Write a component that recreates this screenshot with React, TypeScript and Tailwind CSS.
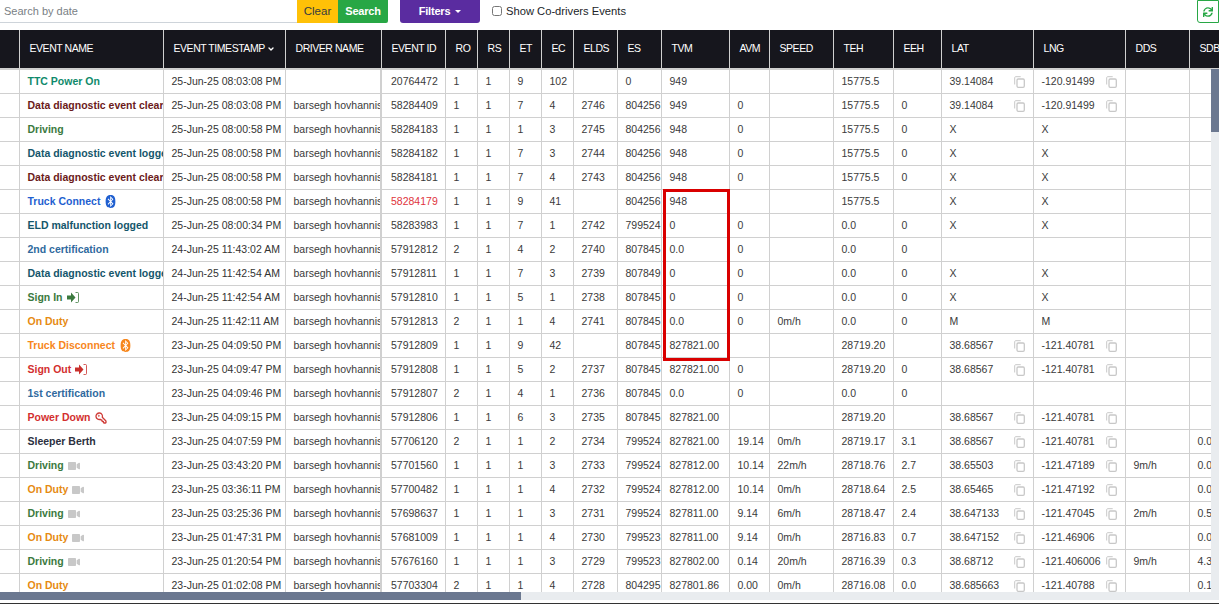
import type { ReactNode } from "react"
import { FaBluetooth, FaVideo, FaSync } from "react-icons/fa"
import { KeyRound, ChevronDown } from "lucide-react"

type Row = {
  name: string
  color: string
  icon?: "bt" | "in" | "out" | "key" | "cam"
  iconColor?: string
  time: string
  driver?: boolean
  id: string
  idRed?: boolean
  ro: string
  rs: string
  et: string
  ec: string
  elds: string
  es: string
  tvm: string
  avm: string
  speed: string
  teh: string
  eeh: string
  lat: string
  lng: string
  dds: string
  sdb: string
}

const line = (
  name: string,
  color: string,
  icon: Row["icon"],
  time: string,
  id: string,
  v: string,
  extra: Partial<Row> = {}
): Row => {
  const p = v.split("|")
  return {
    name,
    color,
    icon,
    time,
    driver: true,
    id,
    ro: p[0],
    rs: p[1],
    et: p[2],
    ec: p[3],
    elds: p[4],
    es: p[5],
    tvm: p[6],
    avm: p[7],
    speed: p[8],
    teh: p[9],
    eeh: p[10],
    lat: p[11],
    lng: p[12],
    dds: p[13] ?? "",
    sdb: p[14] ?? "",
    ...extra,
  }
}

const GREEN = "text-[#3b7a3e]"
const ORANGE = "text-[#e68a13]"
const RED = "text-[#d32f2f]"
const TEAL = "text-[#14566b]"
const MAROON = "text-[#6b1a1a]"
const BLUE = "text-[#2f6a9e]"

const rows: Row[] = [
  line("TTC Power On", "text-[#0f8a6b]", undefined, "25-Jun-25 08:03:08 PM", "20764472", "1|1|9|102||0|949|||15775.5||39.14084|-120.91499", { driver: false }),
  line("Data diagnostic event clear", MAROON, undefined, "25-Jun-25 08:03:08 PM", "58284409", "1|1|7|4|2746|804256|949|0||15775.5|0|39.14084|-120.91499"),
  line("Driving", GREEN, undefined, "25-Jun-25 08:00:58 PM", "58284183", "1|1|1|3|2745|804256|948|0||15775.5|0|X|X"),
  line("Data diagnostic event logged", TEAL, undefined, "25-Jun-25 08:00:58 PM", "58284182", "1|1|7|3|2744|804256|948|0||15775.5|0|X|X"),
  line("Data diagnostic event clear", MAROON, undefined, "25-Jun-25 08:00:58 PM", "58284181", "1|1|7|4|2743|804256|948|0||15775.5|0|X|X"),
  line("Truck Connect", "text-[#1f5fd0]", "bt", "25-Jun-25 08:00:58 PM", "58284179", "1|1|9|41||804256|948|||15775.5||X|X", { idRed: true, iconColor: "text-[#1f5fd0]" }),
  line("ELD malfunction logged", TEAL, undefined, "25-Jun-25 08:00:34 PM", "58283983", "1|1|7|1|2742|799524|0|0||0.0|0|X|X"),
  line("2nd certification", BLUE, undefined, "24-Jun-25 11:43:02 AM", "57912812", "2|1|4|2|2740|807845|0.0|0||0.0|0||"),
  line("Data diagnostic event logged", TEAL, undefined, "24-Jun-25 11:42:54 AM", "57912811", "1|1|7|3|2739|807849|0|0||0.0|0|X|X"),
  line("Sign In", GREEN, "in", "24-Jun-25 11:42:54 AM", "57912810", "1|1|5|1|2738|807845|0|0||0.0|0|X|X"),
  line("On Duty", ORANGE, undefined, "24-Jun-25 11:42:11 AM", "57912813", "2|1|1|4|2741|807845|0.0|0|0m/h|0.0|0|M|M"),
  line("Truck Disconnect", "text-[#f7861b]", "bt", "23-Jun-25 04:09:50 PM", "57912809", "1|1|9|42||807845|827821.00|||28719.20||38.68567|-121.40781", { iconColor: "text-[#f7861b]" }),
  line("Sign Out", RED, "out", "23-Jun-25 04:09:47 PM", "57912808", "1|1|5|2|2737|807845|827821.00|0||28719.20|0|38.68567|-121.40781"),
  line("1st certification", BLUE, undefined, "23-Jun-25 04:09:46 PM", "57912807", "2|1|4|1|2736|807845|0.0|0||0.0|0||"),
  line("Power Down", RED, "key", "23-Jun-25 04:09:15 PM", "57912806", "1|1|6|3|2735|807845|827821.00|||28719.20||38.68567|-121.40781"),
  line("Sleeper Berth", "text-[#2b3040]", undefined, "23-Jun-25 04:07:59 PM", "57706120", "2|1|1|2|2734|799524|827821.00|19.14|0m/h|28719.17|3.1|38.68567|-121.40781||0.0"),
  line("Driving", GREEN, "cam", "23-Jun-25 03:43:20 PM", "57701560", "1|1|1|3|2733|799524|827812.00|10.14|22m/h|28718.76|2.7|38.65503|-121.47189|9m/h|0.0"),
  line("On Duty", ORANGE, "cam", "23-Jun-25 03:36:11 PM", "57700482", "1|1|1|4|2732|799524|827812.00|10.14|0m/h|28718.64|2.5|38.65465|-121.47192||0.0"),
  line("Driving", GREEN, "cam", "23-Jun-25 03:25:36 PM", "57698637", "1|1|1|3|2731|799524|827811.00|9.14|6m/h|28718.47|2.4|38.647133|-121.47045|2m/h|0.5"),
  line("On Duty", ORANGE, "cam", "23-Jun-25 01:47:31 PM", "57681009", "1|1|1|4|2730|799523|827811.00|9.14|0m/h|28716.83|0.7|38.647152|-121.46906||0.0"),
  line("Driving", GREEN, "cam", "23-Jun-25 01:20:54 PM", "57676160", "1|1|1|3|2729|799523|827802.00|0.14|20m/h|28716.39|0.3|38.68712|-121.406006|9m/h|4.3"),
  line("On Duty", ORANGE, undefined, "23-Jun-25 01:02:08 PM", "57703304", "2|1|1|4|2728|804295|827801.86|0.00|0m/h|28716.08|0.0|38.685663|-121.40788||0.1"),
]

const columns: { label: string; width: number }[] = [
  { label: "", width: 19 },
  { label: "EVENT NAME", width: 144 },
  { label: "EVENT TIMESTAMP", width: 122 },
  { label: "DRIVER NAME", width: 96 },
  { label: "EVENT ID", width: 64 },
  { label: "RO", width: 32 },
  { label: "RS", width: 32 },
  { label: "ET", width: 32 },
  { label: "EC", width: 32 },
  { label: "ELDS", width: 44 },
  { label: "ES", width: 44 },
  { label: "TVM", width: 68 },
  { label: "AVM", width: 40 },
  { label: "SPEED", width: 64 },
  { label: "TEH", width: 60 },
  { label: "EEH", width: 48 },
  { label: "LAT", width: 92 },
  { label: "LNG", width: 92 },
  { label: "DDS", width: 64 },
  { label: "SDB", width: 64 },
]

function CopyIcon() {
  return (
    <svg viewBox="0 0 11 12" className="w-[11px] h-[12px] shrink-0 text-[#c8c8c8]" fill="none" stroke="currentColor">
      <path d="M.7 8.5V1.7q0-1 1-1h5" strokeWidth="1" />
      <rect x="3" y="3" width="7.3" height="8.3" rx="1.2" strokeWidth="1.3" />
    </svg>
  )
}

// arrow going into a thin bracket, used for sign in and sign out
function LogIcon({ className }: { className: string }) {
  return (
    <svg viewBox="0 0 12 11" className={`w-[12px] h-[11px] ${className}`}>
      <path d="M0 3.5h4V.5l4.5 5-4.5 5v-3H0z" fill="currentColor" />
      <path d="M8.5.5h2q1 0 1 1v8q0 1-1 1h-2" fill="none" stroke="currentColor" strokeWidth=".8" />
    </svg>
  )
}

function EventIcon({ row }: { row: Row }) {
  if (row.icon === "bt") {
    return (
      <span className={`inline-flex items-center ${row.iconColor}`}>
        <FaBluetooth size={13} />
      </span>
    )
  }
  if (row.icon === "in") return <LogIcon className="text-[#3b7a3e]" />
  if (row.icon === "out") return <LogIcon className="text-[#c9302c]" />
  if (row.icon === "key") return <KeyRound size={12} strokeWidth={2.6} className="text-[#cf3a36] -scale-x-100" />
  if (row.icon === "cam") return <FaVideo size={12} className="text-[#c8c8c8]" />
  return null
}

function Cell({ children, className = "" }: { children?: ReactNode; className?: string }) {
  return (
    <td className={`h-[24px] border border-[#d0d0d0] px-[8px] pt-[1px] pb-0 whitespace-nowrap overflow-hidden ${className}`}>
      {children}
    </td>
  )
}

function Coord({ value }: { value: string }) {
  return (
    <div className="flex items-center justify-between">
      <span>{value}</span>
      {value.includes(".") && <CopyIcon />}
    </div>
  )
}

export default function App() {
  return (
    <div className="h-[604px] w-[1219px] overflow-hidden bg-white font-['Liberation_Sans',Arial,sans-serif] flex flex-col">
      <div className="h-[30px] shrink-0 flex items-start">
        <input
          placeholder="Search by date"
          className="h-[23px] w-[297px] border-b border-[#ced4da] px-[4px] text-[11px] text-[#495057] placeholder:text-[#7a7f85] outline-none"
        />
        <button className="h-[23px] w-[41px] bg-[#ffc107] text-[11.5px] text-[#343a40]">Clear</button>
        <button className="h-[23px] w-[50px] bg-[#28a745] text-[11px] font-bold tracking-[-0.2px] text-white rounded-br-[2px]">Search</button>
        <button className="ml-[12px] h-[23px] w-[80px] bg-[#5a2ca0] text-[11px] font-bold tracking-[-0.2px] text-white rounded-b-[3px] flex items-center justify-center gap-[5px]">
          Filters
          <span className="border-x-[3px] border-t-[3px] border-x-transparent border-t-white" />
        </button>
        <label className="ml-[12px] h-[23px] flex items-center gap-[4px] text-[11.2px] text-[#212529]">
          <input type="checkbox" className="w-[10px] h-[10px] mb-[1px]" />
          Show Co-drivers Events
        </label>
        <button className="ml-auto h-[23px] w-[22px] border border-[#28a745] rounded-bl-[3px] flex items-center justify-center text-[#28a745]">
          <FaSync size={10} />
        </button>
      </div>

      <div className="relative h-[574px] shrink-0 overflow-hidden">
        <table className="table-fixed border-collapse text-[10.5px] text-[#3a3a3a] w-[1253px]">
          <colgroup>
            {columns.map((c, i) => (
              <col key={i} width={c.width} />
            ))}
          </colgroup>
          <thead>
            <tr className="bg-[#16161d] text-white">
              {columns.map((c, i) => (
                <th
                  key={i}
                  className="h-[39px] border-x border-[#d0d0d0] border-b-2 border-b-[#cfcfcf] px-[10px] text-left font-normal tracking-[-0.45px] whitespace-nowrap overflow-hidden first:border-l-0"
                >
                  <span className="inline-flex items-center gap-[2px]">
                    {c.label}
                    {c.label === "EVENT TIMESTAMP" && <ChevronDown size={8} strokeWidth={4} />}
                  </span>
                </th>
              ))}
            </tr>
          </thead>
          <tbody>
            {rows.map((r, i) => (
              <tr key={i}>
                <Cell className="border-l-0" />
                <Cell className={`font-bold ${r.color}`}>
                  <span className="flex items-center gap-[4px]">
                    {r.name}
                    <EventIcon row={r} />
                  </span>
                </Cell>
                <Cell className="text-[#333]">{r.time}</Cell>
                <Cell>{r.driver ? "barsegh hovhannisyan" : ""}</Cell>
                <Cell className={`border-l-2 pl-[9px] ${r.idRed ? "text-[#e0343c]" : ""}`}>{r.id}</Cell>
                <Cell>{r.ro}</Cell>
                <Cell>{r.rs}</Cell>
                <Cell>{r.et}</Cell>
                <Cell>{r.ec}</Cell>
                <Cell>{r.elds}</Cell>
                <Cell>{r.es}</Cell>
                <Cell>{r.tvm}</Cell>
                <Cell>{r.avm}</Cell>
                <Cell>{r.speed}</Cell>
                <Cell>{r.teh}</Cell>
                <Cell>{r.eeh}</Cell>
                <Cell>
                  <Coord value={r.lat} />
                </Cell>
                <Cell>
                  <Coord value={r.lng} />
                </Cell>
                <Cell>{r.dds}</Cell>
                <Cell>{r.sdb}</Cell>
              </tr>
            ))}
          </tbody>
        </table>

        {/* red highlight drawn over the TVM cells */}
        <div className="absolute left-[663px] top-[159px] w-[67px] h-[172px] border-[3px] border-[#d90000]" />

        {/* vertical scrollbar */}
        <div className="absolute right-0 top-[39px] bottom-[12px] w-[8px] bg-[#e9ecef]">
          <div className="h-[63px] bg-[#6b7890]" />
        </div>
        {/* horizontal scrollbar */}
        <div className="absolute left-0 right-0 bottom-[4px] h-[8px] bg-[#e9ecef]">
          <div className="h-full w-[521px] bg-[#6b7890]" />
        </div>
        <div className="absolute left-0 right-0 bottom-0 h-[4px] bg-white border-b border-[#333]" />
      </div>
    </div>
  )
}
